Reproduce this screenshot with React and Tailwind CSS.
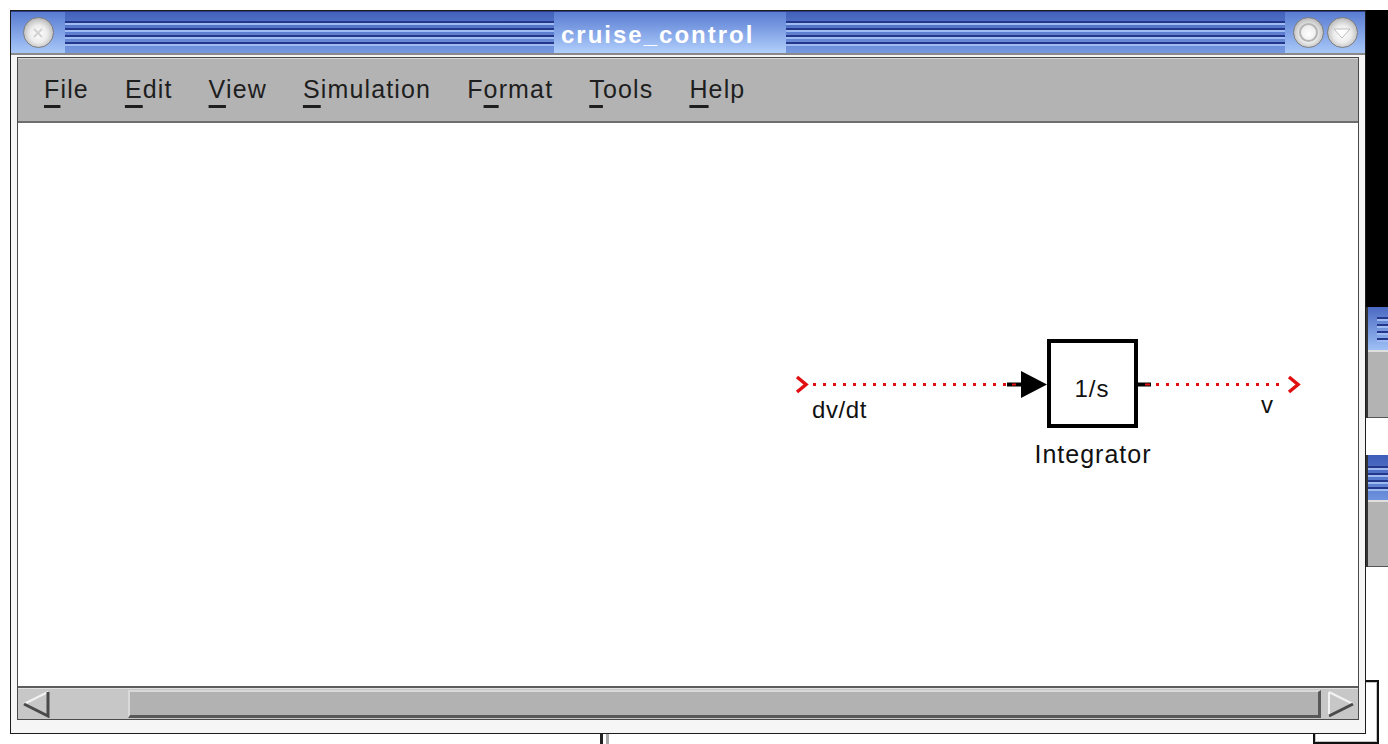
import React from 'react'

const menus = [
  { pre: '', key: 'F', post: 'ile' },
  { pre: '', key: 'E', post: 'dit' },
  { pre: '', key: 'V', post: 'iew' },
  { pre: '', key: 'S', post: 'imulation' },
  { pre: 'F', key: 'o', post: 'rmat' },
  { pre: '', key: 'T', post: 'ools' },
  { pre: '', key: 'H', post: 'elp' },
]

function Stripes({ className = '' }) {
  return (
    <div className={`flex flex-col justify-center gap-[3px] pt-[2px] ${className}`}>
      <div className="h-[4px] border-t-2 border-b-2 border-t-[#24378a] border-b-[#9fbcf2]" />
      <div className="h-[4px] border-t-2 border-b-2 border-t-[#24378a] border-b-[#9fbcf2]" />
      <div className="h-[4px] border-t-2 border-b-2 border-t-[#24378a] border-b-[#9fbcf2]" />
      <div className="h-[4px] border-t-2 border-b-2 border-t-[#24378a] border-b-[#9fbcf2]" />
    </div>
  )
}

function Knob({ children }) {
  return (
    <div className="w-[31px] h-[31px] rounded-full border border-[#7d7d7d] bg-[radial-gradient(circle_at_50%_55%,#ffffff_0%,#ececec_40%,#a9a9a9_85%,#8a8a8a_100%)] flex items-center justify-center">
      {children}
    </div>
  )
}

function TitleBar() {
  return (
    <div className="h-[42px] flex border-t border-[#2b3d84] bg-gradient-to-b from-[#4361bb] to-[#7799e0]">
      <div className="w-[54px] flex items-center justify-center bg-gradient-to-b from-[#5a7cd2] to-[#a9c8f8]">
        <Knob>
          <svg width="12" height="10" viewBox="0 0 12 10">
            <path d="M2 1 L10 9 M10 1 L2 9" stroke="#d2d2d2" strokeWidth="2" />
          </svg>
        </Knob>
      </div>
      <Stripes className="w-[489px]" />
      <div className="w-[232px] flex items-center pl-[7px] pt-[4px] bg-gradient-to-b from-[#5a7cd2] to-[#b2cffb]">
        <span className="text-white font-bold text-[24px] tracking-[2px] leading-none">cruise_control</span>
      </div>
      <Stripes className="flex-1" />
      <div className="w-[80px] flex items-center justify-center gap-[3px] bg-gradient-to-b from-[#5a7cd2] to-[#a9c8f8]">
        <Knob>
          <div className="w-[19px] h-[19px] rounded-full border-2 border-[#b5b5b5]" />
        </Knob>
        <Knob>
          <svg width="18" height="12" viewBox="0 0 18 12">
            <path d="M1 2 H17 L9 11 Z" fill="#ffffff" stroke="#bdbdbd" strokeWidth="1" />
          </svg>
        </Knob>
      </div>
    </div>
  )
}

function MenuBar() {
  return (
    <div className="h-[65px] flex items-center gap-[36px] pl-[26px] bg-[#b3b3b3] border-t border-[#d6d6d6] border-b-2 border-b-[#6e6e6e] text-[25px] tracking-[1.15px] text-[#1e1e1e]">
      {menus.map((m) => (
        <span key={m.key + m.post}>
          {m.pre}
          <span className="underline decoration-[3px] underline-offset-[7px]">{m.key}</span>
          {m.post}
        </span>
      ))}
    </div>
  )
}

// signal line with the dotted red overlay Simulink draws on unconnected lines
function Diagram() {
  return (
    <svg className="absolute inset-0" width="100%" height="100%">
      <g transform="translate(-18,-123)">
        <path d="M797 377 L806 384.5 L797 392" fill="none" stroke="#e01010" strokeWidth="3.5" />
        <line x1="813" y1="384.5" x2="1008" y2="384.5" stroke="#e01010" strokeWidth="3" strokeDasharray="3 7" />
        <line x1="1007" y1="384.5" x2="1022" y2="384.5" stroke="#000" strokeWidth="4" />
        <line x1="1012" y1="384.5" x2="1016" y2="384.5" stroke="#e01010" strokeWidth="2" />
        <path d="M1021 371 L1047 384.5 L1021 398 Z" fill="#000" />
        <rect x="1049" y="341" width="87" height="85" fill="#fff" stroke="#000" strokeWidth="4" />
        <line x1="1137" y1="384.5" x2="1151" y2="384.5" stroke="#000" strokeWidth="4" />
        <line x1="1145" y1="384.5" x2="1150" y2="384.5" stroke="#e01010" strokeWidth="2" />
        <line x1="1156" y1="384.5" x2="1285" y2="384.5" stroke="#e01010" strokeWidth="3" strokeDasharray="3 7" />
        <path d="M1289 377 L1298 384.5 L1289 392" fill="none" stroke="#e01010" strokeWidth="3.5" />
      </g>
    </svg>
  )
}

function Canvas() {
  return (
    <div className="relative flex-1 bg-white overflow-hidden text-[#111]">
      <Diagram />
      <span className="absolute left-[1029px] top-[254px] w-[90px] text-center text-[24px] leading-none tracking-[1px]">1/s</span>
      <span className="absolute left-[794px] top-[275px] text-[24px] leading-none tracking-[0.6px]">dv/dt</span>
      <span className="absolute left-[1243px] top-[270px] text-[24px] leading-none">v</span>
      <span className="absolute left-[1010px] top-[319px] w-[130px] text-center text-[25px] leading-none tracking-[1px]">Integrator</span>
    </div>
  )
}

function ScrollBar() {
  return (
    <div className="h-[33px] flex border-t-2 border-[#5c5c5c] bg-[#c7c7c7]">
      <div className="w-[34px] border-t border-[#e2e2e2] flex items-center justify-center">
        <svg width="30" height="28" viewBox="0 0 30 28">
          <path d="M28 2 L4 14" stroke="#f2f2f2" strokeWidth="2" />
          <path d="M4 14 L28 26 L28 2" fill="none" stroke="#4a4a4a" strokeWidth="3" />
        </svg>
      </div>
      <div className="flex-1 flex border-t border-[#e2e2e2] pl-[76px] pr-[2px] pt-[1px] pb-[1px]">
        <div className="flex-1 bg-[#b2b2b2] border-t-2 border-l-2 border-[#d9d9d9] border-b-[3px] border-r-[3px] border-b-[#585858] border-r-[#585858]" />
      </div>
      <div className="w-[35px] border-t border-[#e2e2e2] flex items-center justify-center">
        <svg width="30" height="28" viewBox="0 0 30 28">
          <path d="M3 2 L3 26" stroke="#f2f2f2" strokeWidth="2" />
          <path d="M3 2 L27 14" stroke="#f2f2f2" strokeWidth="2" />
          <path d="M3 26 L27 14" stroke="#4a4a4a" strokeWidth="3" />
        </svg>
      </div>
    </div>
  )
}

export default function App() {
  return (
    <div className="relative w-[1388px] h-[744px] bg-white overflow-hidden font-['Liberation_Sans',Arial,sans-serif]">
      {/* windows behind the model editor */}
      <div className="absolute left-[1366px] top-[10px] w-[22px] h-[297px] bg-black" />
      <div className="absolute left-[1366px] top-[307px] w-[22px] h-[111px] flex flex-col border-l-2 border-[#333]">
        <div className="h-[43px] flex bg-gradient-to-b from-[#4b69c2] to-[#9fc0f4]">
          <div className="w-[9px]" />
          <Stripes className="flex-1" />
        </div>
        <div className="flex-1 bg-[#b3b3b3] border-t-2 border-[#dedede] border-b border-b-[#555]" />
      </div>
      <div className="absolute left-[1366px] top-[455px] w-[22px] h-[112px] flex flex-col border-l-2 border-[#333]">
        <div className="h-[45px] flex bg-gradient-to-b from-[#3e5cb8] to-[#6f93de]">
          <Stripes className="flex-1" />
        </div>
        <div className="flex-1 bg-[#b3b3b3] border-t-2 border-[#dedede] border-b border-b-[#555]" />
      </div>
      <div className="absolute left-[1313px] top-[680px] w-[66px] h-[64px] border-2 border-[#111] bg-white">
        <div className="w-full h-full border border-[#c4c4c4]" />
      </div>
      <div className="absolute left-[600px] top-[733px] w-[9px] h-[11px] border-l-[3px] border-[#222] border-r-[3px] border-r-[#a8a8a8]" />

      {/* model window */}
      <div className="absolute left-[10px] top-[10px] w-[1356px] h-[724px] flex flex-col border border-[#1c1c1c] bg-[#f6f6f6]">
        <TitleBar />
        <div className="flex-1 flex flex-col border-t-2 border-[#8a8a8a] pt-[2px] px-[6px] pb-[13px]">
          <div className="flex-1 flex flex-col border border-[#4a4a4a]">
            <MenuBar />
            <Canvas />
            <ScrollBar />
          </div>
        </div>
      </div>
    </div>
  )
}
